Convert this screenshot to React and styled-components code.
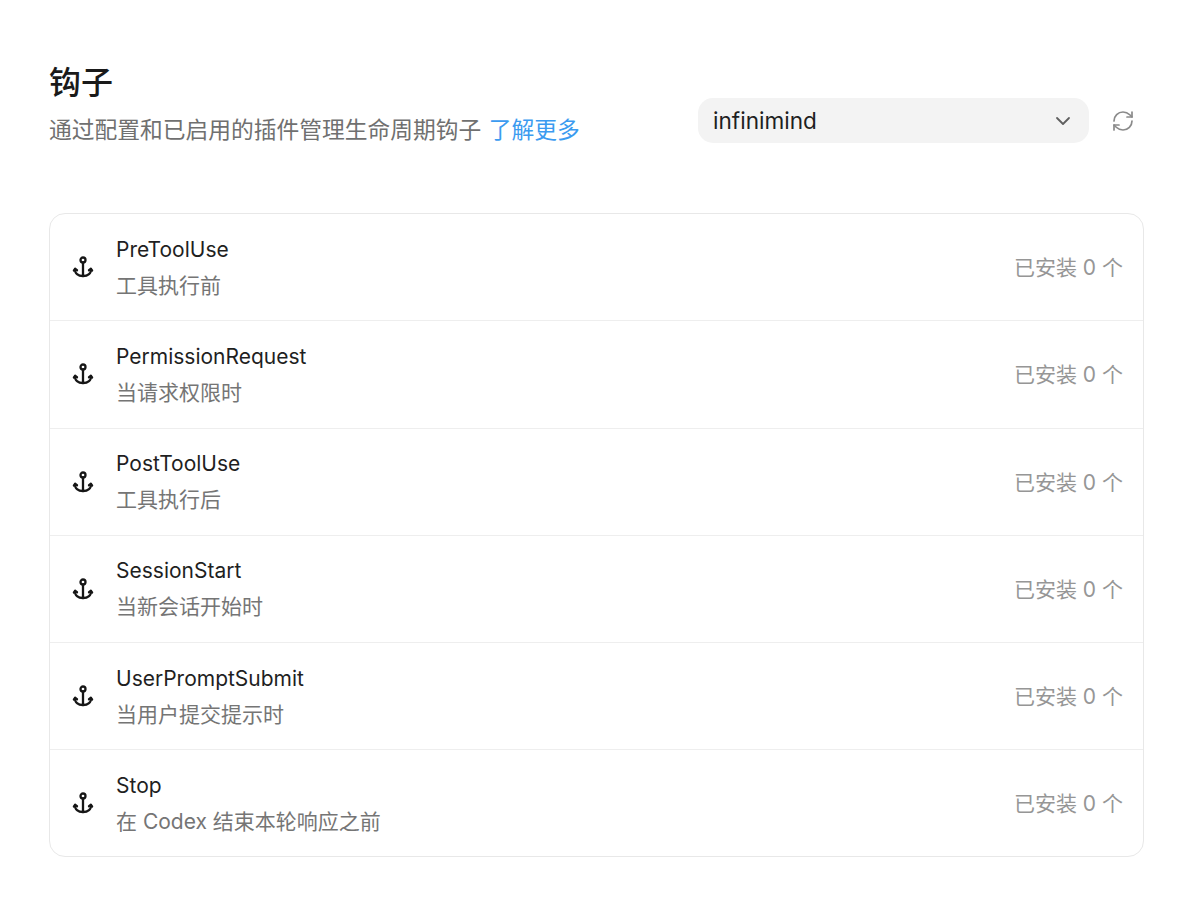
import React from 'react'
import styled, { createGlobalStyle } from 'styled-components'
import { ChevronDown, RefreshCw } from 'lucide-react'

const GlobalStyle = createGlobalStyle`
	html, body {
		margin: 0;
		padding: 0;
		background: #fff;
	}
	body {
		font-family: Inter, "Noto Sans CJK SC", sans-serif;
		color: #1a1a1a;
	}
`

const Page = styled.div`
	width: 1200px;
	height: 903px;
	box-sizing: border-box;
	padding: 62px 56px 0 49px;
`

const Header = styled.header`
	display: flex;
	justify-content: space-between;
	align-items: flex-start;
	height: 86px;
`

const Title = styled.h1`
	margin: 0;
	font-size: 32px;
	line-height: 42px;
	font-weight: 500;
	color: #1a1a1a;
`

const Subtitle = styled.p`
	margin: 9px 0 0;
	font-size: 22.75px;
	line-height: 34px;
	color: #707070;
`

const LearnMore = styled.a`
	color: #3b9bf0;
	margin-left: 7.5px;
`

const Controls = styled.div`
	display: flex;
	align-items: center;
	gap: 22px;
	margin-top: 36px;
	margin-right: 9px;
`

const Select = styled.div`
	width: 391px;
	height: 45px;
	box-sizing: border-box;
	padding: 0 14px 0 15px;
	display: flex;
	align-items: center;
	justify-content: space-between;
	background: #f3f3f3;
	border-radius: 15px;
	font-size: 22.6px;
	color: #1f1f1f;
	svg {
		color: #5f5f5f;
	}
`

const RefreshIcon = styled(RefreshCw)`
	color: #8a8a8a;
	display: block;
`

const List = styled.section`
	margin-top: 65px;
	width: 1095px;
	box-sizing: border-box;
	border: 1px solid #e8e8e8;
	border-radius: 16px;
`

const Row = styled.div`
	height: 107.25px;
	box-sizing: border-box;
	padding: 0 20px 0 21px;
	display: flex;
	align-items: center;
	border-bottom: 1px solid #eeeeee;
	&:last-child {
		height: 106px;
		border-bottom: none;
	}
`

const HookIcon = styled.svg`
	width: 24px;
	height: 24px;
	flex: none;
	margin-right: 21px;
	color: #161616;
`

const Info = styled.div`
	flex: 1;
	display: flex;
	flex-direction: column;
	gap: 7px;
`

const Name = styled.div`
	font-size: 21px;
	line-height: 29px;
	color: #1f1f1f;
`

const Desc = styled.div`
	font-size: 21px;
	line-height: 29px;
	color: #757575;
`

const Count = styled.div`
	font-size: 21px;
	margin-bottom: 2px;
	color: #969696;
`

const hooks = [
	{ name: 'PreToolUse', desc: '工具执行前' },
	{ name: 'PermissionRequest', desc: '当请求权限时' },
	{ name: 'PostToolUse', desc: '工具执行后' },
	{ name: 'SessionStart', desc: '当新会话开始时' },
	{ name: 'UserPromptSubmit', desc: '当用户提交提示时' },
	{ name: 'Stop', desc: '在 Codex 结束本轮响应之前' },
]

function Anchor() {
	return (
		<HookIcon viewBox="0 0 24 24" fill="none" stroke="currentColor" strokeWidth="2.3" strokeLinecap="round" strokeLinejoin="round">
			<circle cx="12" cy="5" r="2.5" />
			<path d="M12 7.500V21" />
			<path d="M4.200 14c-.6 4.300 2.800 7 7.800 7s8.400-2.700 7.800-7" />
			<path d="M2.900 15.500l1.300-1.700 1.800 1.400" />
			<path d="M18 15.200l1.800-1.400 1.300 1.700" />
		</HookIcon>
	)
}

export default function App() {
	return (
		<Page>
			<GlobalStyle />
			<Header>
				<div>
					<Title>钩子</Title>
					<Subtitle>
						通过配置和已启用的插件管理生命周期钩子
						<LearnMore>了解更多</LearnMore>
					</Subtitle>
				</div>
				<Controls>
					<Select>
						<span>infinimind</span>
						<ChevronDown size={24} strokeWidth={1.8} />
					</Select>
					<RefreshIcon size={24} strokeWidth={1.7} />
				</Controls>
			</Header>
			<List>
				{hooks.map((hook) => (
					<Row key={hook.name}>
						<Anchor />
						<Info>
							<Name>{hook.name}</Name>
							<Desc>{hook.desc}</Desc>
						</Info>
						<Count>已安装 0 个</Count>
					</Row>
				))}
			</List>
		</Page>
	)
}
